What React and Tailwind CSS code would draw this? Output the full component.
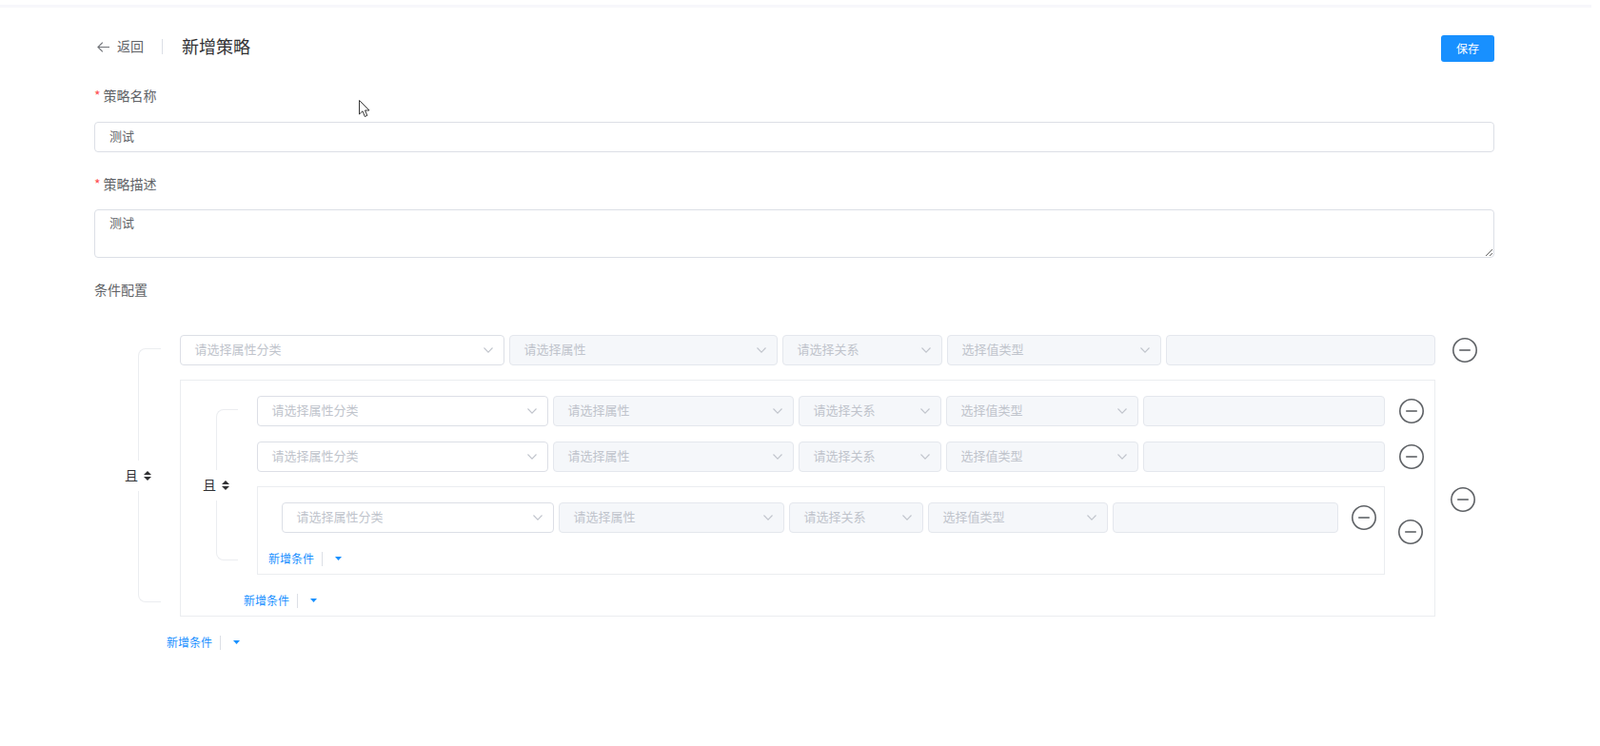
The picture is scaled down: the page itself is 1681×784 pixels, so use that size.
import React from "react";

const Chevron = () => (
  <svg width="10" height="6" viewBox="0 0 10 6" fill="none" stroke="#c0c4cc" strokeWidth="1.1">
    <path d="M0.5 0.5 L5 5.2 L9.5 0.5" />
  </svg>
);

const Minus = ({ className }) => (
  <button className={`shrink-0 ${className}`}>
    <svg width="26" height="26" viewBox="0 0 26 26" fill="none" stroke="#5f6266" strokeWidth="1.6" className="block">
      <circle cx="13" cy="13" r="12.2" />
      <path d="M7.2 13 H18.8" />
    </svg>
  </button>
);

const Select = ({ text, disabled }) => (
  <div
    className={`flex h-8 items-center justify-between rounded-[4px] border pl-[14.5px] pr-[11px] text-[13px] text-[#c0c4cc] ${
      disabled ? "border-[#e4e7ed] bg-[#f5f7fa]" : "border-[#dcdfe6] bg-white"
    }`}
  >
    <span className="pb-[2px]">{text}</span>
    <Chevron />
  </div>
);

const Row = ({ cols, className, minusClass }) => (
  <div className={`flex items-center ${className || ""}`}>
    <div className={`grid gap-[5px] ${cols}`}>
      <Select text="请选择属性分类" />
      <Select text="请选择属性" disabled />
      <Select text="请选择关系" disabled />
      <Select text="选择值类型" disabled />
      <div className="h-8 rounded-[4px] border border-[#e4e7ed] bg-[#f5f7fa]" />
    </div>
    <Minus className={minusClass} />
  </div>
);

const AddLink = ({ className }) => (
  <div className={`mt-4 flex h-[22px] items-center text-xs text-[#1890ff] ${className}`}>
    <span className="pb-[1px]">新增条件</span>
    <span className="ml-[8px] h-[15px] w-px bg-[#dcdfe6]" />
    <svg width="7" height="4" viewBox="0 0 7 4" className="ml-[13px]" fill="#1890ff">
      <path d="M0 0 H7 L3.5 4 Z" />
    </svg>
  </div>
);

const Bracket = ({ className }) => (
  <div className={`flex shrink-0 pt-[14px] pb-[15px] pr-5 ${className}`}>
    <div className="relative flex-1 rounded-l-lg border-y border-l border-[#ebedf0]">
      <div className="absolute -left-[15px] top-1/2 flex h-8 -translate-y-1/2 items-center gap-[6px] bg-white pr-1 text-sm text-[#303133]">
        <span className="pb-[2px]">且</span>
        <svg width="8" height="10" viewBox="0 0 8 10" fill="#303133">
          <path d="M4 0 L8 4 H0 Z M0 6 H8 L4 10 Z" />
        </svg>
      </div>
    </div>
  </div>
);

export default function App() {
  return (
    <div className="relative min-h-screen bg-white font-['Noto_Sans_CJK_SC','Liberation_Sans',sans-serif] text-sm text-[#606266]">
      <div className="mr-[9px] h-2 border-t-[5px] border-white bg-[#f7f7fb]" />

      <div className="ml-[99px] w-[1471px]">
        <div className="mt-[29px] flex items-start justify-between">
          <div className="flex h-6 items-center">
            <svg width="13" height="11" viewBox="0 0 13 11" fill="none" stroke="#707378" strokeWidth="1.1" className="ml-[3px]">
              <path d="M13 5.5 H1 M5.8 0.6 L0.9 5.5 L5.8 10.4" />
            </svg>
            <span className="ml-[8px] pb-[2px]">返回</span>
            <span className="ml-[19px] h-4 w-px bg-[#dcdfe6]" />
            <span className="ml-5 pb-[3px] text-lg text-[#303133]">新增策略</span>
          </div>
          <button className="h-7 w-14 rounded-[3px] bg-[#1890ff] pb-[1px] text-xs text-white">保存</button>
        </div>

        <div className="mt-[26px] h-5 leading-[18px]">
          <span className="mr-[3px] text-[#ff4d4f]">*</span>策略名称
        </div>
        <input
          readOnly
          value="测试"
          className="mt-[17px] block h-8 w-full rounded-[4px] border border-[#dcdfe6] px-[15px] pb-[3px] text-[13px] text-[#606266] outline-none"
        />

        <div className="mt-6 h-5 leading-[18px]">
          <span className="mr-[3px] text-[#ff4d4f]">*</span>策略描述
        </div>
        <textarea
          readOnly
          value="测试"
          className="mt-4 block h-[51px] w-full rounded-[4px] border border-[#dcdfe6] px-[15px] py-[3px] text-[13px] leading-5 text-[#606266] outline-none"
        />

        <div className="mt-6 h-5 leading-[18px]">条件配置</div>

        {/* 条件树 */}
        <div className="mt-[37px]">
          <div className="flex">
            <Bracket className="w-[90px] pl-[46px]" />
            <div className="flex flex-col">
              <Row cols="grid-cols-[341px_282px_168px_225px_283px]" minusClass="ml-[18px]" />

              <div className="mt-[15px] flex items-center">
                <div className="w-[1319px] border border-[#ebedf0] pb-[5px] pt-4">
                  <div className="flex">
                    <Bracket className="w-[80px] pl-[37px]" />
                    <div className="flex flex-col">
                      <Row cols="grid-cols-[306px_253px_150px_202px_254px]" minusClass="ml-[15px]" />
                      <Row cols="grid-cols-[306px_253px_150px_202px_254px]" className="mt-4" minusClass="ml-[15px]" />

                      <div className="mt-[15px] flex items-center">
                        <div className="w-[1185px] border border-[#ebedf0] pb-[5px] pl-[25px] pt-4">
                          <Row cols="grid-cols-[286px_237px_141px_189px_237px]" minusClass="ml-[14px]" />
                          <AddLink className="-ml-[14px]" />
                        </div>
                        <Minus className="ml-[14px] mt-[3px]" />
                      </div>
                    </div>
                  </div>
                  <AddLink className="pl-[66px]" />
                </div>
                <Minus className="ml-4 mt-[3px]" />
              </div>
            </div>
          </div>
          <AddLink className="pl-[76px]" />
        </div>
      </div>

      {/* 截图里的鼠标指针 */}
      <svg width="12" height="19" viewBox="0 0 12 19" className="absolute left-[377px] top-[105px]" fill="white" stroke="#222" strokeWidth="0.9">
        <path d="M0.5 0.5 V15 L4 11.8 L6.3 17.5 L8.8 16.4 L6.5 11 H11 Z" />
      </svg>
    </div>
  );
}
